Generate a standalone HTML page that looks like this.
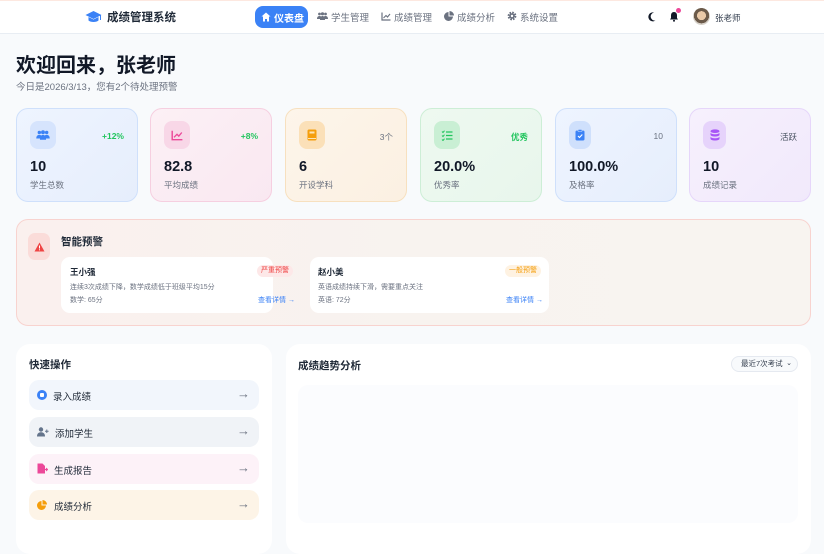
<!DOCTYPE html>
<html><head><meta charset="utf-8"><style>
*{margin:0;padding:0;box-sizing:border-box}
body{width:824px;height:540px;overflow:hidden;background:#f8fafc;font-family:"Liberation Sans","Noto Sans CJK SC",sans-serif;color:#111827;position:relative}
.a{position:absolute}
.hdr{left:0;top:0;width:824px;height:34px;background:#fff;border-bottom:1px solid #e8edf3;border-top:1px solid #fde8e0}
.nav{font-size:9.5px;color:#6b7280;top:10px}
.card{top:108px;width:122px;height:94px;border-radius:12px;border:1px solid}
.ib{left:13px;top:12px;width:26px;height:28px;border-radius:8px;display:flex;align-items:center;justify-content:center}
.tag{right:13px;top:22px;font-size:8.5px;font-weight:bold}
.val{left:13px;top:50px;font-size:14.5px;font-weight:bold;color:#111827}
.lbl{left:13px;top:70px;font-size:8.5px;color:#6b7280}
.wc{top:257px;height:56px;background:#fff;border-radius:9px}
.btn{left:29px;width:230px;height:30px;border-radius:10px;font-size:9.5px;color:#1f2937}
.btn span{position:absolute;left:24px;top:9px}
.btn .ar{position:absolute;right:9px;top:6px;font-size:13px;color:#6b7280}
</style></head><body>
<div class="a hdr"></div>
<svg class="a" style="left:85px;top:10px" width="17" height="14" viewBox="0 0 17 14"><path d="M8.5 1L0.5 5l8 4 8-4z" fill="#3b82f6"/><path d="M3.5 7v3.5c2 2 8 2 10 0V7l-5 2.5z" fill="#3b82f6"/><rect x="15" y="5" width="1" height="5" fill="#3b82f6"/></svg>
<div class="a" style="left:107px;top:9px;font-size:11.5px;font-weight:bold;color:#1f2937">成绩管理系统</div>
<div class="a" style="left:255px;top:6px;width:53px;height:22px;border-radius:8px;background:#3b82f6"></div>
<svg class="a" style="left:261px;top:12px" width="10" height="10" viewBox="0 0 10 10"><path d="M5 0.5L0.5 4.5H2V9.5H4V7H6V9.5H8V4.5H9.5z" fill="#fff"/></svg>
<div class="a" style="left:274px;top:10px;font-size:10px;color:#fff;font-weight:bold">仪表盘</div>
<svg class="a" style="left:317px;top:12px" width="11" height="9" viewBox="0 0 11 9"><circle cx="2.5" cy="2" r="1.4" fill="#6b7280"/><circle cx="5.5" cy="1.8" r="1.6" fill="#6b7280"/><circle cx="8.5" cy="2" r="1.4" fill="#6b7280"/><path d="M0 7c0-2 1-3 2.5-3S5 5 5 7zM3 8c0-3 1.2-4 2.5-4S8 5 8 8zM6 7c0-2 1-3 2.5-3S11 5 11 7z" fill="#6b7280"/></svg>
<div class="a nav" style="left:331px">学生管理</div>
<svg class="a" style="left:381px;top:12px" width="10" height="9" viewBox="0 0 10 9"><path d="M1 0.5V8H9.5" stroke="#6b7280" fill="none" stroke-width="1.2"/><path d="M2.5 6L5 3.5 6.5 5 9 2" stroke="#6b7280" fill="none" stroke-width="1.1"/></svg>
<div class="a nav" style="left:394px">成绩管理</div>
<svg class="a" style="left:444px;top:11px" width="10" height="10" viewBox="0 0 10 10"><path d="M4.5 1A4.5 4.5 0 1 0 9 5.5H4.5z" fill="#6b7280"/><path d="M5.5 0V4.5H10A4.5 4.5 0 0 0 5.5 0z" fill="#6b7280"/></svg>
<div class="a nav" style="left:457px">成绩分析</div>
<svg class="a" style="left:507px;top:11px" width="10" height="10" viewBox="0 0 10 10"><circle cx="5" cy="5" r="3.3" fill="none" stroke="#6b7280" stroke-width="2.2" stroke-dasharray="1.6 1"/><circle cx="5" cy="5" r="2.8" fill="#6b7280"/><circle cx="5" cy="5" r="1.2" fill="#fff"/></svg>
<div class="a nav" style="left:520px">系统设置</div>
<svg class="a" style="left:648px;top:12px" width="8" height="10" viewBox="0 0 8 10"><path d="M6 0.5A4.5 4.5 0 1 0 7.5 8.5 4 4 0 0 1 6 0.5z" fill="#111827"/></svg>
<svg class="a" style="left:669px;top:11px" width="10" height="11" viewBox="0 0 10 11"><path d="M5 1C3 1 2 2.5 2 4.5V7L1 8.5H9L8 7V4.5C8 2.5 7 1 5 1z" fill="#111827"/><circle cx="5" cy="9.8" r="1" fill="#111827"/></svg>
<div class="a" style="left:676px;top:8px;width:5px;height:5px;border-radius:50%;background:#ec4899"></div>
<div class="a" style="left:693px;top:8px;width:17px;height:17px;border-radius:50%;background:radial-gradient(circle at 50% 45%,#e9c9a8 0 35%,#6b5a4a 36% 60%,#d6d0c8 61%)"></div>
<div class="a" style="left:715px;top:12px;font-size:8.5px;color:#374151">张老师</div>

<div class="a" style="left:16px;top:49px;font-size:20px;font-weight:bold;color:#111827">欢迎回来，张老师</div>
<div class="a" style="left:16px;top:79px;font-size:9.5px;color:#6b7280">今日是2026/3/13，您有2个待处理预警</div>

<div class="a card" style="left:16px;background:linear-gradient(135deg,#eef4ff,#e6eefc);border-color:#cfe0fb">
<div class="a ib" style="background:#d6e4fd"><svg width="14" height="11" viewBox="0 0 11 9"><circle cx="2.5" cy="2" r="1.4" fill="#3b82f6"/><circle cx="5.5" cy="1.8" r="1.6" fill="#3b82f6"/><circle cx="8.5" cy="2" r="1.4" fill="#3b82f6"/><path d="M0 7c0-2 1-3 2.5-3S5 5 5 7zM3 8c0-3 1.2-4 2.5-4S8 5 8 8zM6 7c0-2 1-3 2.5-3S11 5 11 7z" fill="#3b82f6"/></svg></div>
<div class="a tag" style="color:#22c55e">+12%</div><div class="a val">10</div><div class="a lbl">学生总数</div></div>
<div class="a card" style="left:150px;background:linear-gradient(135deg,#fcf0f5,#f9e8f1);border-color:#f6cfe0">
<div class="a ib" style="background:#f8d7e7"><svg width="12" height="11" viewBox="0 0 10 9"><path d="M1 0.5V8H9.5" stroke="#ec4899" fill="none" stroke-width="1.2"/><path d="M2.5 6L5 3.5 6.5 5 9 2" stroke="#ec4899" fill="none" stroke-width="1.1"/></svg></div>
<div class="a tag" style="color:#22c55e">+8%</div><div class="a val">82.8</div><div class="a lbl">平均成绩</div></div>
<div class="a card" style="left:285px;background:linear-gradient(135deg,#fdf5ea,#fbf0e2);border-color:#f7e0bf">
<div class="a ib" style="background:#fbe0b8"><svg width="10" height="12" viewBox="0 0 10 12"><rect x="0.5" y="0.5" width="9" height="11" rx="1.5" fill="#f59e0b"/><rect x="2.5" y="2.5" width="5" height="2" fill="#fde4b3"/><rect x="1" y="9" width="8" height="1" fill="#fde4b3"/></svg></div>
<div class="a tag" style="color:#6b7280;font-weight:normal">3个</div><div class="a val">6</div><div class="a lbl">开设学科</div></div>
<div class="a card" style="left:420px;background:linear-gradient(135deg,#eef9f0,#e8f6ec);border-color:#cdeed6">
<div class="a ib" style="background:#c9efd4"><svg width="12" height="11" viewBox="0 0 12 11"><path d="M1 1.5l1 1 1.5-1.8M1 5.5l1 1 1.5-1.8M1 9.5l1 1 1.5-1.8" stroke="#22c55e" fill="none"/><path d="M5 2h6.5M5 5.5h6.5M5 9h6.5" stroke="#22c55e" stroke-width="1.3"/></svg></div>
<div class="a tag" style="color:#22c55e">优秀</div><div class="a val">20.0%</div><div class="a lbl">优秀率</div></div>
<div class="a card" style="left:555px;background:linear-gradient(135deg,#eef4ff,#e6eefc);border-color:#cfe0fb">
<div class="a ib" style="background:#cfe0fc;width:22px"><svg width="10" height="12" viewBox="0 0 10 12"><rect x="0.5" y="1.5" width="9" height="10" rx="1.5" fill="#3b82f6"/><rect x="3" y="0.5" width="4" height="2" rx="0.6" fill="#3b82f6" stroke="#cfe0fc" stroke-width="0.6"/><path d="M3 7l1.5 1.5 2.8-3" stroke="#fff" fill="none" stroke-width="1.1"/></svg></div>
<div class="a tag" style="color:#6b7280;font-weight:normal">10</div><div class="a val">100.0%</div><div class="a lbl">及格率</div></div>
<div class="a card" style="left:689px;background:linear-gradient(135deg,#f6f0fd,#f1e9fb);border-color:#e6d6fa">
<div class="a ib" style="background:#e6d3fb;width:23px"><svg width="10" height="12" viewBox="0 0 10 12"><ellipse cx="5" cy="2.2" rx="4.5" ry="1.8" fill="#a855f7"/><path d="M0.5 3.5v2.2c0 1 2 1.8 4.5 1.8s4.5-.8 4.5-1.8V3.5c0 1-2 1.8-4.5 1.8S.5 4.5.5 3.5zM0.5 7.5v2.2c0 1 2 1.8 4.5 1.8s4.5-.8 4.5-1.8V7.5c0 1-2 1.8-4.5 1.8S.5 8.5.5 7.5z" fill="#a855f7"/></svg></div>
<div class="a tag" style="color:#4b5563;font-weight:normal">活跃</div><div class="a val">10</div><div class="a lbl">成绩记录</div></div>

<div class="a" style="left:16px;top:219px;width:795px;height:107px;border-radius:12px;background:linear-gradient(90deg,#faf0ee,#f8f3ef 50%,#f8f4f0);border:1px solid #f8d3cf"></div>
<div class="a" style="left:28px;top:233px;width:22px;height:27px;border-radius:7px;background:#fadcd9;display:flex;align-items:center;justify-content:center"><svg width="11" height="10" viewBox="0 0 11 10"><path d="M5.5 0.5L10.5 9.5H0.5z" fill="#ef4444"/><rect x="5" y="3.5" width="1" height="3" fill="#fff"/><rect x="5" y="7.3" width="1" height="1" fill="#fff"/></svg></div>
<div class="a" style="left:61px;top:234px;font-size:10.5px;font-weight:bold;color:#1f2937">智能预警</div>
<div class="a wc" style="left:61px;width:212px"></div>
<div class="a" style="left:70px;top:266px;font-size:8.5px;font-weight:bold;color:#1f2937">王小强</div>
<div class="a" style="left:257px;top:265px;width:36px;height:12px;border-radius:6px;background:#fde8e8;color:#ef4444;font-size:7px;text-align:center;line-height:12px">严重预警</div>
<div class="a" style="left:70px;top:282px;font-size:7px;color:#6b7280">连续3次成绩下降，数学成绩低于班级平均15分</div>
<div class="a" style="left:70px;top:295px;font-size:7px;color:#6b7280">数学: 65分</div>
<div class="a" style="left:258px;top:295px;font-size:7px;color:#3b82f6">查看详情 →</div>
<div class="a wc" style="left:310px;width:239px"></div>
<div class="a" style="left:318px;top:266px;font-size:8.5px;font-weight:bold;color:#1f2937">赵小美</div>
<div class="a" style="left:505px;top:265px;width:36px;height:12px;border-radius:6px;background:#fef2e2;color:#f59e0b;font-size:7px;text-align:center;line-height:12px">一般预警</div>
<div class="a" style="left:318px;top:282px;font-size:7px;color:#6b7280">英语成绩持续下滑，需要重点关注</div>
<div class="a" style="left:318px;top:295px;font-size:7px;color:#6b7280">英语: 72分</div>
<div class="a" style="left:506px;top:295px;font-size:7px;color:#3b82f6">查看详情 →</div>

<div class="a" style="left:16px;top:344px;width:256px;height:210px;border-radius:14px;background:#fff"></div>
<div class="a" style="left:29px;top:357px;font-size:10.5px;font-weight:bold;color:#1f2937">快速操作</div>
<div class="a btn" style="top:380px;background:#f2f6fc"><svg class="a" style="left:8px;top:10px" width="10" height="10"><circle cx="5" cy="5" r="5" fill="#3b82f6"/><rect x="3" y="3" width="4" height="4" rx="1" fill="#fff"/></svg><span style="left:24px">录入成绩</span><div class="ar">→</div></div>
<div class="a btn" style="top:417px;background:#f0f3f7"><svg class="a" style="left:8px;top:10px" width="12" height="10" viewBox="0 0 12 10"><circle cx="4" cy="2.5" r="2.2" fill="#64748b"/><path d="M0 9.5c0-3 1.8-4.2 4-4.2s4 1.2 4 4.2z" fill="#64748b"/><path d="M9.8 2.5v3.5M8 4.2h3.6" stroke="#64748b" stroke-width="1"/></svg><span style="left:26px">添加学生</span><div class="ar">→</div></div>
<div class="a btn" style="top:454px;background:#fdf2f8"><svg class="a" style="left:8px;top:9px" width="11" height="11" viewBox="0 0 11 11"><path d="M0.5 0.5H5.5L8 3V10.5H0.5z" fill="#ec4899"/><path d="M7 6.5h3.5M9 5l1.5 1.5L9 8" stroke="#ec4899" fill="none"/></svg><span style="left:25px">生成报告</span><div class="ar">→</div></div>
<div class="a btn" style="top:490px;background:#fdf4e7"><svg class="a" style="left:8px;top:10px" width="10" height="10" viewBox="0 0 10 10"><path d="M4.5 1A4.5 4.5 0 1 0 9 5.5H4.5z" fill="#f59e0b"/><path d="M5.5 0V4.5H10A4.5 4.5 0 0 0 5.5 0z" fill="#f59e0b"/></svg><span style="left:25px">成绩分析</span><div class="ar">→</div></div>

<div class="a" style="left:286px;top:344px;width:525px;height:210px;border-radius:14px;background:#fff"></div>
<div class="a" style="left:298px;top:358px;font-size:10.5px;font-weight:bold;color:#1f2937">成绩趋势分析</div>
<div class="a" style="left:731px;top:356px;width:67px;height:16px;border-radius:8px;border:1px solid #e5e9f0;background:#f8fafc;font-size:7.5px;color:#374151;line-height:14px;padding-left:9px">最近7次考试 <span style="position:absolute;right:5px;font-size:7px">⌄</span></div>
<div class="a" style="left:298px;top:385px;width:500px;height:138px;border-radius:10px;background:#fbfcfe"></div>
</body></html>
